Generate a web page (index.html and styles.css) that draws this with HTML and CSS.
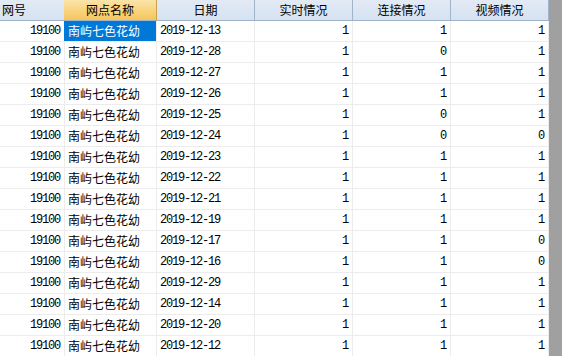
FILE: index.html
```html
<!DOCTYPE html>
<html lang="zh-CN">
<head>
    <meta charset="UTF-8">
    <title>网点视频情况</title>
    <link rel="stylesheet" href="styles.css">
</head>
<body>
    <div class="view">
        <div class="grid" id="grid">
            <div class="row head">
                <div class="cell left">网号</div>
                <div class="cell active">网点名称</div>
                <div class="cell">日期</div>
                <div class="cell">实时情况</div>
                <div class="cell">连接情况</div>
                <div class="cell">视频情况</div>
            </div>
        </div>
        <div class="scroll"></div>
    </div>
    <script>
        const rows = [
            ['2019-12-13', 1, 1, 1],
            ['2019-12-28', 1, 0, 1],
            ['2019-12-27', 1, 1, 1],
            ['2019-12-26', 1, 1, 1],
            ['2019-12-25', 1, 0, 1],
            ['2019-12-24', 1, 0, 0],
            ['2019-12-23', 1, 1, 1],
            ['2019-12-22', 1, 1, 1],
            ['2019-12-21', 1, 1, 1],
            ['2019-12-19', 1, 1, 1],
            ['2019-12-17', 1, 1, 0],
            ['2019-12-16', 1, 1, 0],
            ['2019-12-29', 1, 1, 1],
            ['2019-12-14', 1, 1, 1],
            ['2019-12-20', 1, 1, 1],
            ['2019-12-12', 1, 1, 1]
        ];

        const grid = document.getElementById("grid");
        rows.forEach((r, i) => {
            const row = document.createElement("div");
            row.className = "row";
            row.innerHTML =
                `<div class="cell num">19100</div>` +
                `<div class="cell name${i === 0 ? ' selected' : ''}">南屿七色花幼</div>` +
                `<div class="cell date">${r[0]}</div>` +
                `<div class="cell num">${r[1]}</div>` +
                `<div class="cell num">${r[2]}</div>` +
                `<div class="cell num">${r[3]}</div>`;
            grid.appendChild(row);
        });
    </script>
</body>
</html>
```

FILE: styles.css
```css
body {
    margin: 0;
    background: #ffffff;
    font-family: "Noto Sans CJK SC", sans-serif;
    font-size: 12px;
    color: #000000;
    overflow: hidden;
}
.view {
    display: flex;
    height: 356px;
}
.grid {
    width: 549px;
    overflow: hidden;
}
.scroll {
    width: 13px;
    background: #a0a0a0;
}
.row {
    display: grid;
    grid-template-columns: 65px 92px 98px 98px 98px 98px;
}
.cell {
    box-sizing: border-box;
    height: 21px;
    line-height: 20px;
    border-right: 1px solid #ececec;
    border-bottom: 1px solid #ececec;
    padding: 0 3px;
    white-space: nowrap;
    overflow: hidden;
}
.head .cell {
    background: linear-gradient(#e2eaf5, #d6e2f1);
    border-right-color: #9fb3cc;
    border-bottom-color: #9fb3cc;
    text-align: center;
}
.head .cell.left {
    text-align: left;
    padding-left: 2px;
}
.head .cell.active {
    background: linear-gradient(#fbe4a8, #f5c55c);
    border-right-color: #c9a24e;
    margin-left: -1px;
}
.num {
    text-align: right;
    padding-right: 4px;
    font-family: "Liberation Mono", monospace;
    letter-spacing: -1.2px;
}
.date {
    font-family: "Liberation Mono", monospace;
    letter-spacing: -1.2px;
}
.name.selected {
    background: #0078d7;
    color: #ffffff;
    margin-left: -1px;
    padding-left: 4px;
}
```
